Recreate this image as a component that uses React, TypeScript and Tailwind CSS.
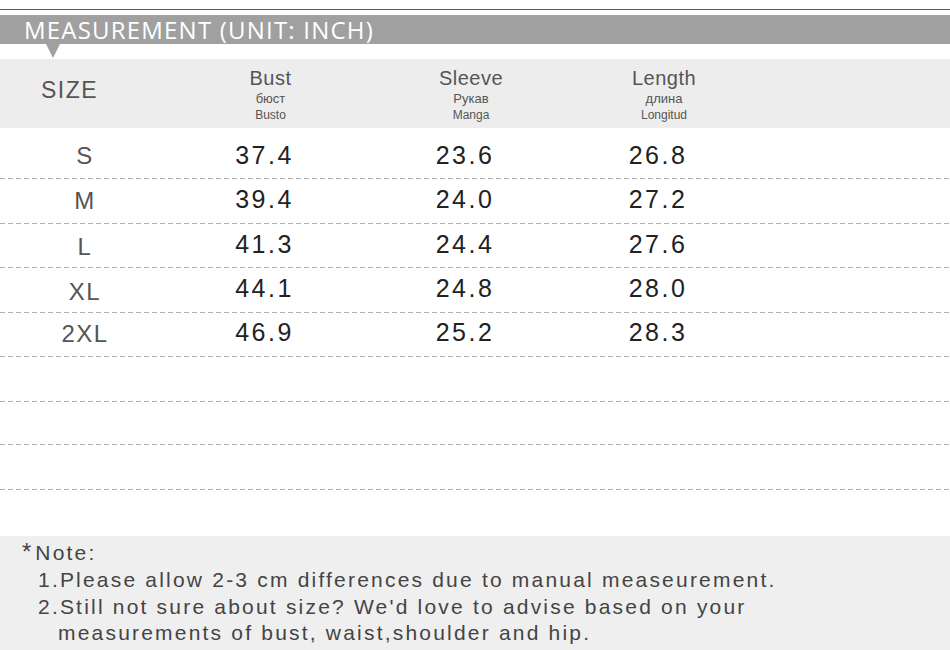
const rows = [
  { size: 'S', bust: '37.4', sleeve: '23.6', length: '26.8', h: 'h-[50px]', lp: 'pt-[16px]', np: 'pt-[15px]' },
  { size: 'M', bust: '39.4', sleeve: '24.0', length: '27.2', h: 'h-[44px]', lp: 'pt-[10px]', np: 'pt-[8px]' },
  { size: 'L', bust: '41.3', sleeve: '24.4', length: '27.6', h: 'h-[43px]', lp: 'pt-[11px]', np: 'pt-[8px]' },
  { size: 'XL', bust: '44.1', sleeve: '24.8', length: '28.0', h: 'h-[44px]', lp: 'pt-[12px]', np: 'pt-[8px]' },
  { size: '2XL', bust: '46.9', sleeve: '25.2', length: '28.3', h: 'h-[43px]', lp: 'pt-[9px]', np: 'pt-[7px]' },
];

// empty rows below the data, to fill the table
const blanks = ['h-[44px]', 'h-[42px]', 'h-[44px]'];

const cols = 'grid grid-cols-[170px_189px_212px_174px_1fr]';

const Dashed = () => (
  <div className="h-px bg-[image:repeating-linear-gradient(90deg,#b3b3b3_0px,#b3b3b3_5px,transparent_5px,transparent_8px)]" />
);

const HeadCell = ({ en, ru, es }: { en: string; ru: string; es: string }) => (
  <div className="flex flex-col items-center pl-[12px] pt-[8px] text-[#555]">
    <span className="text-[20px] leading-[23px] tracking-[0.5px]">{en}</span>
    <span className="text-[13px] leading-[17px]">{ru}</span>
    <span className="text-[12px] leading-[17px]">{es}</span>
  </div>
);

export default function App() {
  return (
    <div className="w-[950px] h-[650px] overflow-hidden bg-white font-['Liberation_Sans',Arial,sans-serif]">
      <div className="h-[9px]" />
      <div className="h-px bg-[#5c5c5c]" />
      <div className="h-[5px]" />
      <div className="relative h-[29px] bg-[#a0a0a0] pl-[24px] pt-px">
        <span className="font-['Open_Sans',sans-serif] text-[24px] leading-[28px] tracking-[1.2px] text-white">
          MEASUREMENT (UNIT: INCH)
        </span>
        <div className="absolute left-[46px] top-full w-0 h-0 border-l-[7px] border-r-[7px] border-t-[14px] border-l-transparent border-r-transparent border-t-[#a0a0a0]" />
      </div>
      <div className="h-[15px]" />

      <div className={`${cols} h-[69px] bg-[#ededed]`}>
        <div className="pl-[41px] pt-[20px] text-[23px] leading-[23px] tracking-[1.5px] text-[#555]">SIZE</div>
        <HeadCell en="Bust" ru="бюст" es="Busto" />
        <HeadCell en="Sleeve" ru="Рукав" es="Manga" />
        <HeadCell en="Length" ru="длина" es="Longitud" />
        <div />
      </div>

      {rows.map((r) => (
        <div key={r.size}>
          <div className={`${cols} ${r.h}`}>
            <div className={`text-center text-[24px] leading-[24px] tracking-[1.5px] text-[#555] ${r.lp}`}>{r.size}</div>
            {[r.bust, r.sleeve, r.length].map((v, i) => (
              <div key={i} className={`text-center text-[25px] leading-[25px] tracking-[2.5px] text-[#222] ${r.np}`}>
                {v}
              </div>
            ))}
            <div />
          </div>
          <Dashed />
        </div>
      ))}

      {blanks.map((h, i) => (
        <div key={i}>
          <div className={h} />
          <Dashed />
        </div>
      ))}
      <div className="h-[46px]" />

      <div className="h-[114px] bg-[#efefef] pt-[2px] text-[21px] leading-[27px] tracking-[2.2px] text-[#444]">
        <div className="pl-[22px]">
          <span className="text-[24px] tracking-normal mr-[4px]">*</span>Note:
        </div>
        <div className="pl-[38px]">1.Please allow 2-3 cm differences due to manual measeurement.</div>
        <div className="pl-[38px]">2.Still not sure about size? We'd love to advise based on your</div>
        <div className="pl-[58px] leading-[26px]">measurements of bust, waist,shoulder and hip.</div>
      </div>
    </div>
  );
}
